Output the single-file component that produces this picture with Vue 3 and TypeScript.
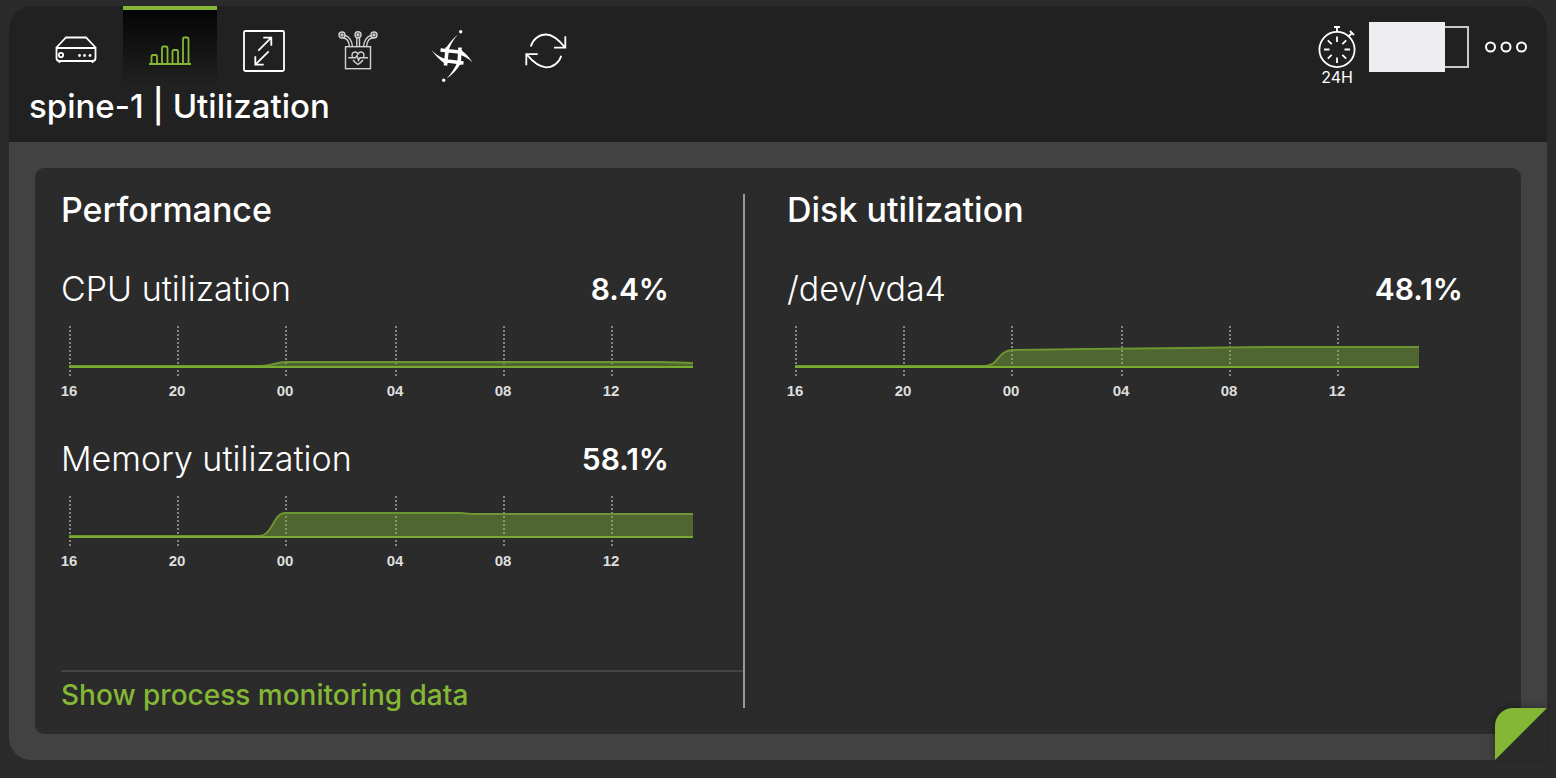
<script setup lang="ts">
interface Metric {
  name: string
  value: string
  line: string
  start: number
}

interface Tick {
  label: string
  x: number
}

const ticks: Tick[] = [
  { label: '16', x: 9 },
  { label: '20', x: 117 },
  { label: '00', x: 225 },
  { label: '04', x: 335 },
  { label: '08', x: 443 },
  { label: '12', x: 551 },
]

const performance: Metric[] = [
  {
    name: 'CPU utilization',
    value: '8.4%',
    line: 'C212 44 214 40 225 40 L600 40 L632 41',
    start: 200,
  },
  {
    name: 'Memory utilization',
    value: '58.1%',
    line: 'C212 44 212 21 224 21 L400 21 L410 22 L632 22',
    start: 198,
  },
]

const disk: Metric[] = [
  {
    name: '/dev/vda4',
    value: '48.1%',
    line: 'C212 44 210 29 225 28 L300 27 L400 26 L480 25 L632 25',
    start: 198,
  },
]

const groups = [
  { title: 'Performance', metrics: performance, footer: true },
  { title: 'Disk utilization', metrics: disk, footer: false },
]
</script>

<template>
  <main class="page">
    <section class="card">
      <header class="header">
        <div class="bar">
          <nav class="tabs">
            <button class="tab" aria-label="Device">
              <svg viewBox="0 0 54 54">
                <path d="M7 24 17 13.5H37L47 24M7.500 24H46.500V34Q46.500 37 43.500 37H10.500Q7.500 37 7.500 34ZM10.500 37V39M43.500 37V39" />
                <circle cx="12" cy="31" r="2.200" />
                <g class="solid">
                  <circle cx="30.500" cy="31.500" r="1.400" />
                  <circle cx="35.500" cy="31.500" r="1.400" />
                  <circle cx="41" cy="31.500" r="1.400" />
                </g>
              </svg>
            </button>
            <button class="tab active" aria-label="Utilization">
              <svg viewBox="0 0 54 54">
                <path d="M6 40H48M8.500 40V32.500Q8.500 31 10 31H12.500Q14 31 14 32.500V40M19 40V24Q19 22.500 20.500 22.500H23Q24.500 22.500 24.500 24V40M29.500 40V27.500Q29.500 26 31 26H33.500Q35 26 35 27.500V40M40 40V15Q40 13.500 41.500 13.500H44Q45.500 13.500 45.500 15V40" />
              </svg>
            </button>
            <button class="tab" aria-label="Interfaces">
              <svg viewBox="0 0 54 54">
                <rect x="7" y="7" width="40" height="40" rx="1.500" />
                <path d="M21.300 26.700 34.300 13.700M26.300 13.700H34.300V21.700M31.700 27.300 18.300 40.700M18.300 32.300V40.700H26.700" />
              </svg>
            </button>
            <button class="tab" aria-label="Sensors">
              <svg viewBox="0 0 54 54" class="muted">
                <rect x="14.500" y="22.700" width="25" height="22" />
                <circle cx="11" cy="11" r="3" />
                <circle cx="27" cy="10.700" r="3" />
                <circle cx="43" cy="11" r="3" />
                <circle cx="11" cy="11" r="1" />
                <circle cx="27" cy="10.700" r="1" />
                <circle cx="43" cy="11" r="1" />
                <path d="M12 14C16 14 18 18 18.500 22.500M14 11.500C18 12 21 17 21.500 22.500M25.800 14V22.500M28.500 14V22.500M42 14C38 14 36 18 35.500 22.500M40 11.500C36 12 33 17 32.500 22.500" />
                <path d="M21.500 33.500C20 30 22 28 24 28Q26 28 27 30Q28 28 30 28C32 28 34 30 32.500 33.500M22 36Q24 38.500 27 40.500Q30 38.500 32 36M17.300 33.700H24.500L26 31.500 27.500 36.500 29 33.700H37" />
              </svg>
            </button>
            <button class="tab" aria-label="Lifecycle">
              <svg viewBox="0 0 54 54">
                <g class="solid">
                  <circle cx="35.700" cy="7.700" r="1.700" />
                  <circle cx="18.700" cy="56.300" r="1.700" />
                  <path d="M33 10.500Q27 15 21 24L24 25Q27 17 33 10.500ZM6.500 26Q12 34 19 39L20 35Q12 32 6.500 26ZM21.500 54.500Q30 49 35.500 40L32 39Q28 48 21.500 54.500ZM36 26Q43 31 47.500 38.500Q42 33 35.500 31Z" />
                </g>
                <path class="knot" d="M15.500 26 37 28.300M18 36.500 38.500 39M22.300 23.500 20.500 41.500M35 23.500 34 41" />
              </svg>
            </button>
            <button class="tab" aria-label="Refresh">
              <svg viewBox="0 0 54 54">
                <path d="M11.700 22.500C14 15 20 10.500 27 10.500C34 10.500 40 16 46.300 23.700M46.300 12.300V23.700H35M42.300 31.700C40 39 34 43.300 27 43.300C20 43.300 14 38 7.300 30.200M7.300 41.300V30.200H18.700" />
              </svg>
            </button>
          </nav>
          <div class="tools">
            <button class="time" aria-label="Time range 24H">
              <svg viewBox="0 0 40 44">
                <circle cx="20" cy="24.500" r="17.600" />
                <path d="M20 2V7M17 2H23M31.500 11.500 35 8M33 6 37 10M20 11.500V17M20 32.500V38M7 24.500H12.500M27.500 24.500H33M10.800 15.300 14.700 19.200M25.300 19.200 29.200 15.300M10.800 33.700 14.700 29.800M25.300 29.800 29.200 33.700" />
              </svg>
              <span>24H</span>
            </button>
            <div class="group">
              <div class="cover"></div>
              <div class="frame"></div>
              <button class="more" aria-label="More options">
                <svg viewBox="0 0 46 14">
                  <circle cx="7.500" cy="7" r="4.500" />
                  <circle cx="23" cy="7" r="4.500" />
                  <circle cx="38.500" cy="7" r="4.500" />
                </svg>
              </button>
            </div>
          </div>
        </div>
        <h1>spine-1 | Utilization</h1>
      </header>

      <div class="panel">
        <section v-for="group in groups" :key="group.title" class="column">
          <h2>{{ group.title }}</h2>
          <article v-for="metric in group.metrics" :key="metric.name" class="metric">
            <div class="row">
              <span>{{ metric.name }}</span>
              <strong>{{ metric.value }}</strong>
            </div>
            <svg class="chart" viewBox="0 0 640 78">
              <path
                v-for="tick in ticks"
                :key="tick.label"
                class="grid"
                :d="`M${tick.x} 4V55`"
              />
              <path class="area" :d="`M8 44 H${metric.start} ${metric.line} V45 H8 Z`" />
              <path class="curve" :d="`M8 44 H${metric.start} ${metric.line}`" />
              <path class="base" d="M8 45H632" />
              <text v-for="tick in ticks" :key="tick.label" :x="tick.x - 1" y="74">{{ tick.label }}</text>
            </svg>
          </article>
          <footer v-if="group.footer">
            <a href="#processes">Show process monitoring data</a>
          </footer>
        </section>
      </div>
      <button class="fold" aria-label="Flip card"><span></span></button>
    </section>
  </main>
</template>

<style>
body {
  background: #2b2b2b;
}
</style>

<style scoped>
* {
  box-sizing: border-box;
}

.page {
  display: flex;
  min-height: 100vh;
  padding: 6px 9px 18px;
  background: #2b2b2b;
  color: #fff;
  font-family: Inter, "Liberation Sans", sans-serif;
}

button {
  padding: 0;
  border: 0;
  background: none;
  color: inherit;
  font: inherit;
  cursor: pointer;
}

svg {
  display: block;
  overflow: visible;
  fill: none;
  stroke: currentColor;
  stroke-width: 1.8;
}

.card {
  position: relative;
  display: flex;
  flex: 1;
  flex-direction: column;
  min-width: 0;
  border-radius: 22px;
  background: #424242;
}

.header {
  padding: 0 18px 16px 20px;
  border-radius: 22px 22px 0 0;
  background: #212121;
}

.bar {
  display: flex;
  justify-content: space-between;
  height: 80px;
}

.tabs {
  display: flex;
}

.tab {
  display: flex;
  justify-content: center;
  width: 94px;
  height: 80px;
  padding-top: 14px;
  border-top: 4px solid transparent;
}

.tab svg {
  width: 54px;
  height: 54px;
}

.tab.active {
  border-top-color: #84b735;
  background: linear-gradient(#050505, #212121);
  color: #84b735;
}

.solid {
  fill: currentColor;
  stroke: none;
}

.muted {
  color: #d2d2d2;
  stroke-width: 1.4;
}

.knot {
  stroke-width: 3.6;
}

.tools {
  display: flex;
  gap: 12px;
  padding-top: 16px;
}

.time {
  display: flex;
  flex-direction: column;
  align-items: center;
  align-self: flex-start;
  padding-top: 3px;
  font-size: 16px;
  line-height: 16px;
}

.time svg {
  width: 40px;
  height: 44px;
}

.group {
  display: flex;
  align-items: center;
  height: 50px;
}

.cover {
  width: 76px;
  height: 50px;
  background: #eeeef0;
}

.frame {
  width: 24px;
  height: 42px;
  margin-right: 14px;
  border: 2px solid #c8c8c8;
  border-left: 0;
}

.more svg {
  width: 46px;
  height: 14px;
  stroke-width: 2;
}

h1,
h2 {
  margin: 0;
  font-size: 34px;
  font-weight: 500;
}

h1 {
  font-size: 33px;
  line-height: 40px;
}

.panel {
  display: grid;
  flex: 1;
  grid-template-columns: minmax(0, 684fr) minmax(0, 750fr);
  margin: 26px;
  padding: 26px;
  border-radius: 9px;
  background: #2b2b2b;
}

.column {
  display: flex;
  flex-direction: column;
}

.column:first-child {
  border-right: 2px solid #9a9a9a;
}

.column:last-child {
  padding-left: 42px;
}

h2 {
  margin-bottom: 43px;
  line-height: 32px;
}

.metric {
  margin-bottom: 39px;
}

.column:first-child .metric {
  padding-right: 42px;
}

.row {
  display: flex;
  align-items: center;
  justify-content: space-between;
  margin-bottom: 13px;
  padding-right: 32px;
  font-size: 34px;
  font-weight: 300;
  line-height: 40px;
}

.row strong {
  font-size: 30px;
  font-weight: 600;
}

.chart {
  width: 100%;
  max-width: 640px;
}

.grid {
  stroke: #858585;
  stroke-width: 2;
  stroke-dasharray: 2 2;
}

.area {
  fill: rgba(132, 184, 54, 0.42);
  stroke: none;
}

.curve {
  stroke: #6c9632;
  stroke-width: 2;
}

.base {
  stroke: #79ab31;
  stroke-width: 2;
}

.chart text {
  fill: #dedede;
  stroke: none;
  font-family: "Liberation Sans", Arial, sans-serif;
  font-size: 15px;
  font-weight: 700;
  text-anchor: middle;
}

footer {
  margin-top: auto;
  padding-top: 10px;
  border-top: 2px solid #444;
  font-size: 28px;
  font-weight: 500;
  line-height: 26px;
}

footer a {
  color: #84b735;
  text-decoration: none;
}

.fold {
  position: absolute;
  right: 0;
  bottom: 0;
  width: 52px;
  height: 52px;
  border-radius: 18px 0 0 0;
  background: #2b2b2b;
  box-shadow: -2px -2px 6px rgba(0, 0, 0, 0.25);
}

.fold span {
  display: block;
  height: 100%;
  border-radius: 18px 0 0 0;
  background: #84b735;
  clip-path: polygon(0 0, 100% 0, 0 100%);
}
</style>
